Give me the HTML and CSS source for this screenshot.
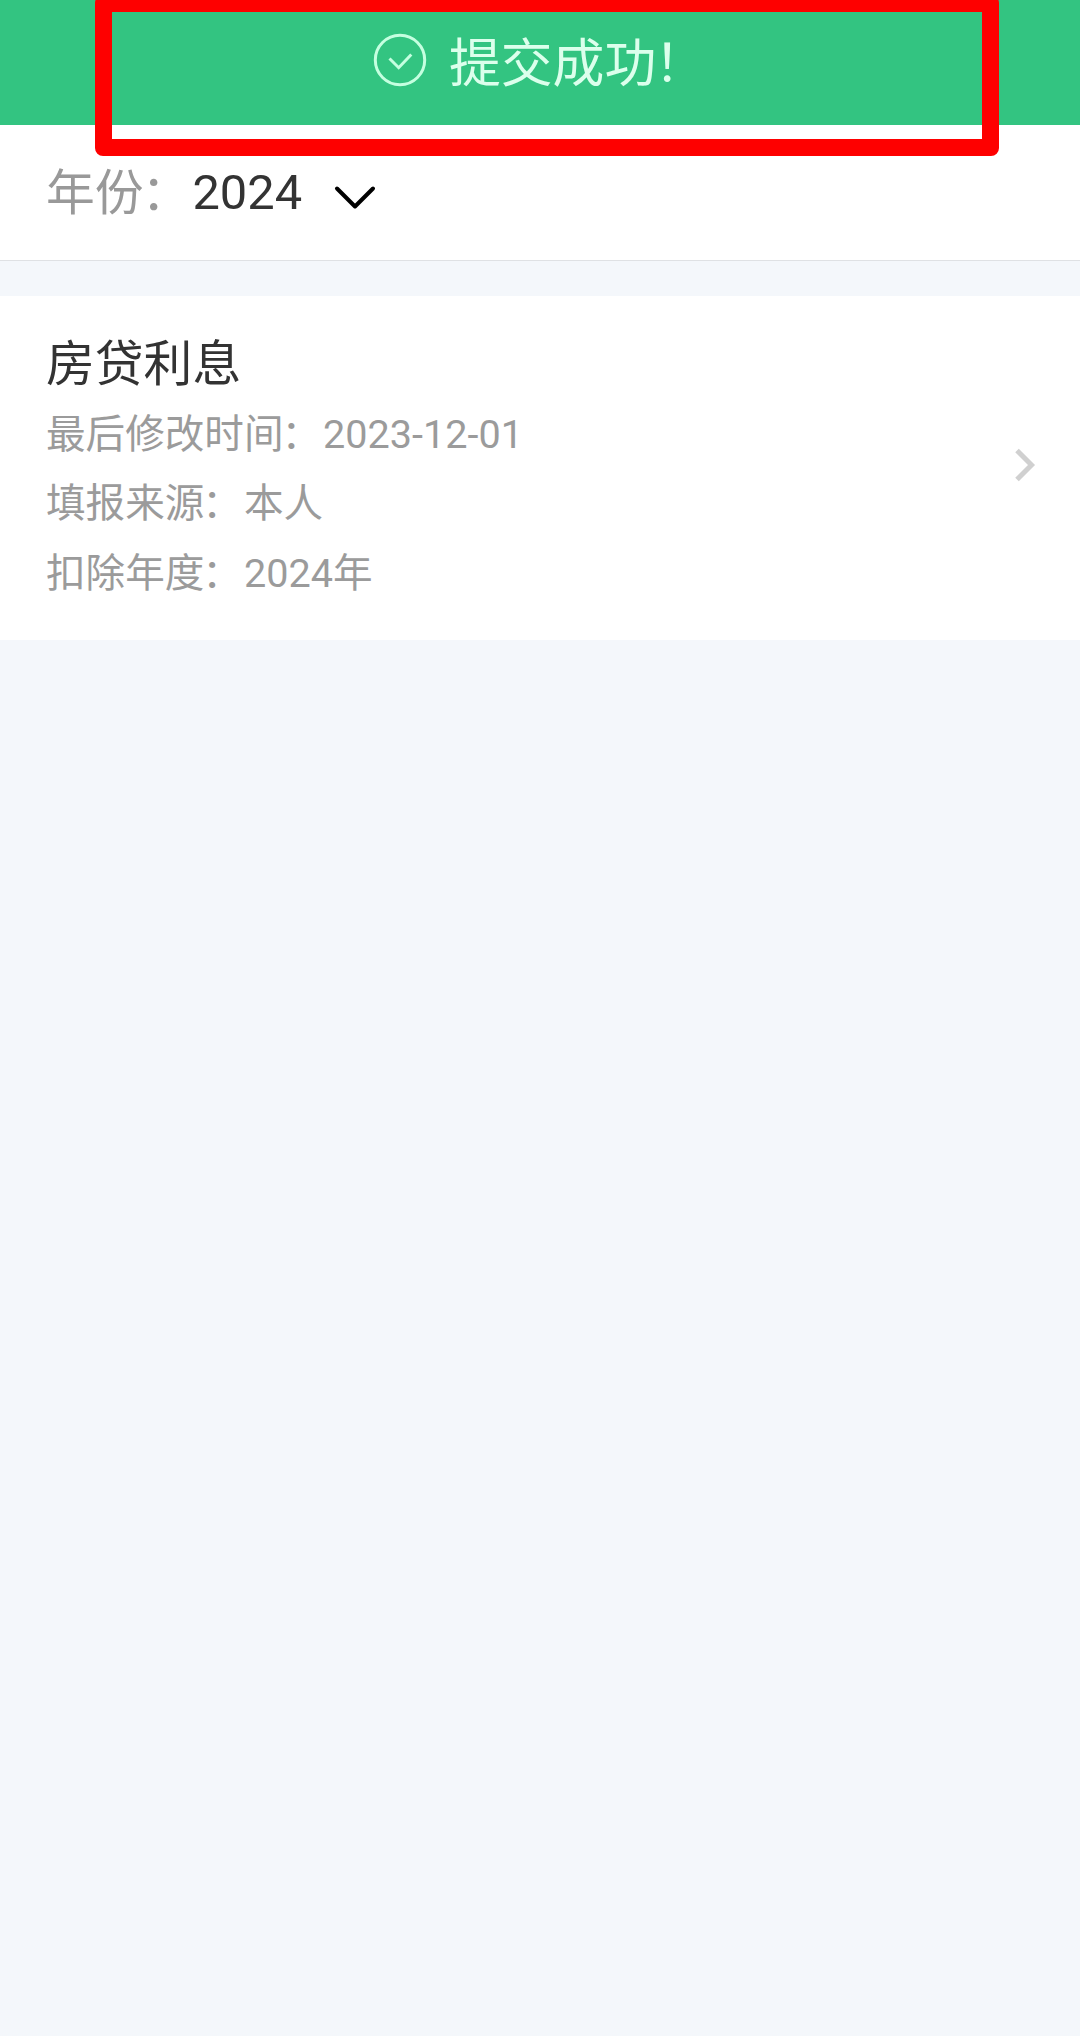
FILE: index.html
```html
<!DOCTYPE html>
<html lang="zh-CN">
<head>
    <meta charset="UTF-8">
    <meta name="viewport" content="width=device-width, initial-scale=1.0">
    <title>填报记录</title>
    <link rel="stylesheet" href="styles.css">
</head>
<body>
    <div class="toast">
        <svg class="toast-icon" width="54" height="54" viewBox="0 0 54 54">
            <circle cx="27" cy="27" r="24.7"/>
            <path d="M16.5 25.5l9.2 9.2 12.6-13.2"/>
        </svg>
        <span class="toast-text">提交成功<span class="mark">！</span></span>
        <div class="highlight"></div>
    </div>

    <div class="year-filter">
        <span class="label">年份<span class="colon">：</span></span>
        <span class="year">2024</span>
        <svg class="arrow-down" width="42" height="26" viewBox="0 0 42 26">
            <path d="M3 3.5l18 18 18-18"/>
        </svg>
    </div>

    <div class="record">
        <div class="record-info">
            <h2>房贷利息</h2>
            <p>最后修改时间<span class="colon">：</span>2023-12-01</p>
            <p>填报来源<span class="colon">：</span>本人</p>
            <p>扣除年度<span class="colon">：</span>2024年</p>
        </div>
        <svg class="arrow-right" width="22" height="36" viewBox="0 0 22 36">
            <path d="M2 3.5l14.5 14.5L2 32.5"/>
        </svg>
    </div>
</body>
</html>
```

FILE: styles.css
```css
* {
    box-sizing: border-box;
}
body {
    margin: 0;
    min-height: 100vh;
    background-color: #f4f7fb;
    color: #333;
    font-family: Roboto, "Noto Sans CJK SC", sans-serif;
}
svg {
    fill: none;
    flex-shrink: 0;
}
.toast {
    position: relative;
    display: flex;
    align-items: center;
    height: 125px;
    padding: 0 0 5px 373px;
    background-color: #33c481;
    color: #dcffec;
    font-size: 51.8px;
    line-height: 60px;
}
.toast-icon {
    margin-right: 22px;
    stroke: #c5ffe0;
    stroke-width: 3;
}
.toast-text {
    padding-top: 9px;
}
.mark {
    margin-left: -2px;
}
/* red frame over the toast */
.highlight {
    position: absolute;
    top: -5px;
    left: 95px;
    width: 904px;
    height: 161px;
    border: 17px solid #fe0000;
    border-radius: 8px;
}
.year-filter {
    display: flex;
    align-items: center;
    height: 136px;
    padding: 0 46px;
    background-color: #fff;
    border-bottom: 1px solid #dfe1e4;
    font-size: 48.8px;
    line-height: 60px;
}
.label {
    padding-top: 3px;
    color: #999;
}
.colon {
    margin: 0 2px 0 -2px;
}
.arrow-down {
    margin: 11px 0 0 32px;
    stroke: #000;
    stroke-width: 4;
    stroke-linecap: round;
    stroke-linejoin: round;
}
.record {
    display: flex;
    align-items: center;
    justify-content: space-between;
    height: 344px;
    margin-top: 35px;
    padding: 0 43px 0 46px;
    background-color: #fff;
}
.record-info {
    padding-top: 2px;
}
.record h2 {
    margin: 0;
    font-size: 48.8px;
    font-weight: 400;
    line-height: 70px;
}
.record p {
    margin: 0;
    color: #9b9b9b;
    font-size: 39.6px;
    line-height: 69.3px;
}
.arrow-right {
    margin-bottom: 6px;
    stroke: #d0d0d0;
    stroke-width: 5;
}
```
